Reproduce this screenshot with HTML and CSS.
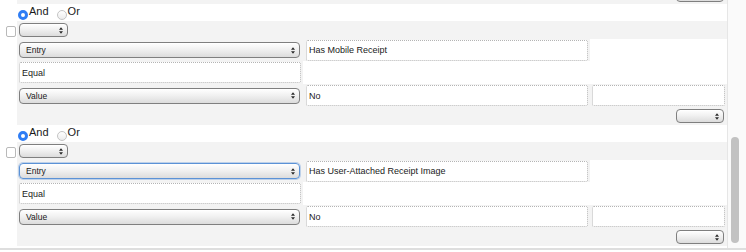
FILE: index.html
```html
<!DOCTYPE html>
<html lang="en">
<head>
    <meta charset="UTF-8">
    <title>Rule Conditions</title>
    <link rel="stylesheet" href="styles.css">
</head>
<body>

    <div class="pane">
        <div class="list">

            <!-- tail of the previous condition -->
            <div class="cond-foot prev">
                <div class="select tiny"><span></span>
                    <svg class="arrows" viewBox="0 0 5 8"><path d="M2.5 0L5 3H0Z M0 5H5L2.5 8Z"/></svg>
                </div>
            </div>

            <!-- Condition: Has Mobile Receipt -->
            <div class="group">
                <div class="logic">
                    <label><input type="radio" name="join1" checked><span>And</span></label>
                    <label><input type="radio" name="join1"><span>Or</span></label>
                </div>
                <div class="cond-head">
                    <div class="check-col"><input type="checkbox" class="check"></div>
                    <div class="band">
                        <div class="select small"><span></span>
                            <svg class="arrows" viewBox="0 0 5 8"><path d="M2.5 0L5 3H0Z M0 5H5L2.5 8Z"/></svg>
                        </div>
                    </div>
                </div>
                <div class="cond-body">
                    <div class="cell"><div class="select wide"><span>Entry</span>
                        <svg class="arrows" viewBox="0 0 5 8"><path d="M2.5 0L5 3H0Z M0 5H5L2.5 8Z"/></svg></div></div>
                    <div class="cell mid"><input class="field" type="text" value="Has Mobile Receipt"></div>
                    <div class="cell empty"></div>

                    <div class="cell"><input class="field" type="text" value="Equal"></div>
                    <div class="cell empty"></div>
                    <div class="cell empty"></div>

                    <div class="cell"><div class="select wide"><span>Value</span>
                        <svg class="arrows" viewBox="0 0 5 8"><path d="M2.5 0L5 3H0Z M0 5H5L2.5 8Z"/></svg></div></div>
                    <div class="cell mid"><input class="field" type="text" value="No"></div>
                    <div class="cell"><input class="field" type="text" value=""></div>
                </div>
                <div class="cond-foot">
                    <div class="select tiny"><span></span>
                        <svg class="arrows" viewBox="0 0 5 8"><path d="M2.5 0L5 3H0Z M0 5H5L2.5 8Z"/></svg>
                    </div>
                </div>
            </div>

            <!-- Condition: Has User-Attached Receipt Image -->
            <div class="group">
                <div class="logic">
                    <label><input type="radio" name="join2" checked><span>And</span></label>
                    <label><input type="radio" name="join2"><span>Or</span></label>
                </div>
                <div class="cond-head">
                    <div class="check-col"><input type="checkbox" class="check"></div>
                    <div class="band">
                        <div class="select small"><span></span>
                            <svg class="arrows" viewBox="0 0 5 8"><path d="M2.5 0L5 3H0Z M0 5H5L2.5 8Z"/></svg>
                        </div>
                    </div>
                </div>
                <div class="cond-body">
                    <div class="cell"><div class="select wide focus"><span>Entry</span>
                        <svg class="arrows" viewBox="0 0 5 8"><path d="M2.5 0L5 3H0Z M0 5H5L2.5 8Z"/></svg></div></div>
                    <div class="cell mid"><input class="field" type="text" value="Has User-Attached Receipt Image"></div>
                    <div class="cell empty"></div>

                    <div class="cell"><input class="field" type="text" value="Equal"></div>
                    <div class="cell empty"></div>
                    <div class="cell empty"></div>

                    <div class="cell"><div class="select wide"><span>Value</span>
                        <svg class="arrows" viewBox="0 0 5 8"><path d="M2.5 0L5 3H0Z M0 5H5L2.5 8Z"/></svg></div></div>
                    <div class="cell mid"><input class="field" type="text" value="No"></div>
                    <div class="cell"><input class="field" type="text" value=""></div>
                </div>
                <div class="cond-foot">
                    <div class="select tiny"><span></span>
                        <svg class="arrows" viewBox="0 0 5 8"><path d="M2.5 0L5 3H0Z M0 5H5L2.5 8Z"/></svg>
                    </div>
                </div>
            </div>

        </div>

        <!-- Scrollbar -->
        <div class="scrollbar"><div class="thumb"></div></div>
    </div>

</body>
</html>
```

FILE: styles.css
```css
/* General Styles */
body {
    font-family: 'Liberation Sans', Arial, sans-serif;
    margin: 0;
    padding: 0;
    background-color: #fff;
    color: #1a1a1a;
}

/* Scroll pane */
.pane {
    display: flex;
    height: 248px;
    border-bottom: 2px solid #dedede;
    overflow: hidden;
}

.list {
    width: 727px;
    overflow: hidden;
}

/* And / Or row */
.logic {
    display: flex;
    height: 17px;
    padding-left: 18px;
    gap: 8px;
}

.logic label {
    display: flex;
    align-items: flex-start;
    font-size: 11px;
    line-height: 14px;
}

.logic input[type="radio"] {
    appearance: none;
    -webkit-appearance: none;
    box-sizing: border-box;
    width: 10px;
    height: 10px;
    margin: 6px 1px 0 0;
    border-radius: 50%;
    border: 1px solid #c4c4c4;
    background: linear-gradient(#fff, #ececec);
}

.logic input[type="radio"]:checked {
    border: 3px solid #2f7df4;
    background: #fff;
}

/* Condition header */
.cond-head {
    display: flex;
    height: 18px;
}

.check-col {
    width: 17px;
    display: flex;
    align-items: center;
    padding-top: 3px;
    box-sizing: border-box;
}

.check {
    appearance: none;
    -webkit-appearance: none;
    box-sizing: border-box;
    width: 10px;
    height: 11px;
    margin: 0 0 0 6px;
    border: 1px solid #b9b9b9;
    border-radius: 2px;
    background: #fff;
}

.band {
    flex: 1;
    background-color: #f3f3f3;
    display: flex;
    align-items: center;
    padding-left: 2px;
}

/* Condition body */
.cond-body {
    margin-left: 17px;
    display: grid;
    grid-template-columns: 286px 287px 1fr;
    grid-template-rows: 22px 23px 23px;
}

.cell {
    background-color: #f3f3f3;
    display: flex;
    align-items: center;
    padding: 0 2px;
}

.cell.mid {
    padding-left: 3px;
}

.cell.empty {
    background-color: #fff;
}

.cell .field {
    width: 100%;
}

.field {
    box-sizing: border-box;
    height: 21px;
    margin: 0;
    padding: 0 2px;
    border: 1px dotted #b4b4b4;
    border-radius: 2px;
    background: #fff;
    font-family: 'Liberation Sans', Arial, sans-serif;
    font-size: 9px;
    color: #1a1a1a;
    outline: none;
}

/* Footer row with the add select */
.cond-foot {
    margin-left: 17px;
    height: 18px;
    background-color: #f3f3f3;
    display: flex;
    justify-content: flex-end;
    align-items: flex-start;
    padding: 2px 3px 0 0;
    box-sizing: border-box;
}

.cond-foot.prev {
    margin-top: -14px;
}

/* Aqua-like select */
.select {
    box-sizing: border-box;
    display: flex;
    align-items: center;
    justify-content: space-between;
    height: 16px;
    padding: 0 4px 0 6px;
    border: 1px solid #7f7f7f;
    border-radius: 4px;
    background: linear-gradient(#ffffff, #f1f1f1 45%, #dcdcdc);
    box-shadow: inset 0 1px 0 #fff;
    font-size: 8.5px;
    color: #1a1a1a;
}

.select.wide {
    width: 281px;
}

.select.small {
    width: 49px;
    height: 14px;
}

.select.tiny {
    width: 48px;
    height: 14px;
}

.select.focus {
    border-color: #5b92d6;
    box-shadow: 0 0 0 1px rgba(91, 146, 214, 0.35);
}

.arrows {
    width: 4px;
    height: 7px;
    fill: #2a2a2a;
}

/* Scrollbar */
.scrollbar {
    width: 19px;
    box-sizing: border-box;
    border-left: 1px solid #e6e6e6;
    background-color: #fafafa;
    padding: 137px 0 0 3px;
}

.thumb {
    width: 8px;
    height: 106px;
    border-radius: 4px;
    background-color: #c2c2c2;
}
```
